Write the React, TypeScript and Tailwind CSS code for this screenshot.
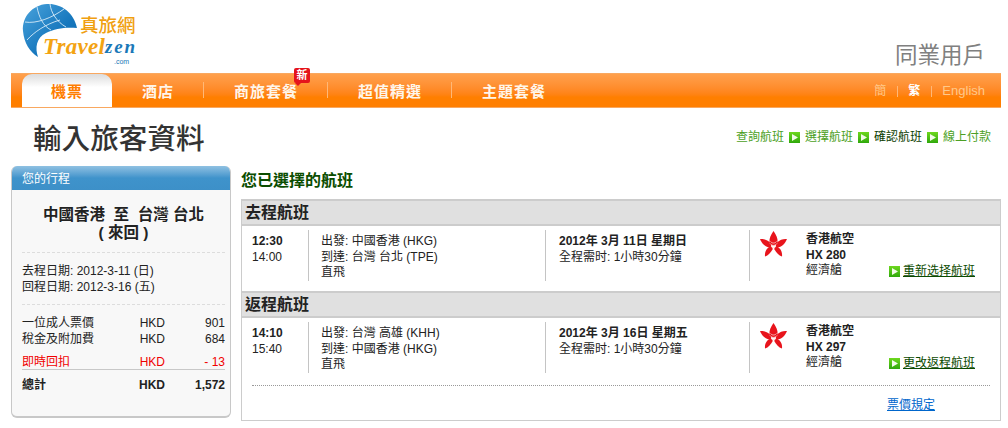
const font = '[font-family:"Liberation_Sans","Noto_Sans_CJK_TC",sans-serif]'

function Logo() {
  return (
    <svg width="120" height="66" viewBox="0 0 120 66" className="block">
      <defs>
        <linearGradient id="globeBg" x1="0" y1="0" x2="1" y2="1">
          <stop offset="0" stopColor="#4aa3dc" />
          <stop offset="0.6" stopColor="#1677bd" />
          <stop offset="1" stopColor="#0f68ab" />
        </linearGradient>
      </defs>
      <path d="M55 28C52 12 38 3 25 4C10 5 0 17 1 31C2 43 8 52 16 57C13 48 14 38 24 33C33 28 45 27 55 28Z" fill="url(#globeBg)" />
      <path d="M3 22C14 24 30 18 42 9M5 40C12 32 24 24 38 20M15 7C17 17 21 26 29 30M28 4C29 13 35 22 44 27" fill="none" stroke="#d6eaf7" strokeWidth="0.9" />
      <text x="58" y="32" fontSize="18.500" fill="#f0a010" fontFamily='"Noto Sans CJK TC", sans-serif' fontWeight="500">真旅網</text>
      <text x="21" y="54" fontSize="23" fontStyle="italic" fontWeight="700" fill="#f3a312" fontFamily='"Liberation Serif", serif' textLength="62">Travel</text>
      <text x="83" y="53" fontSize="19" fontStyle="italic" fontWeight="700" fill="#1a78b8" fontFamily='"Liberation Serif", serif' textLength="30">zen</text>
      <text x="92" y="64" fontSize="7" fill="#1a78b8" fontFamily='"Liberation Sans", sans-serif'>.com</text>
    </svg>
  )
}

function PlayIcon() {
  return (
    <svg width="11" height="11" viewBox="0 0 11 11" className="block shrink-0">
      <defs>
        <linearGradient id="playBg" x1="0" y1="0" x2="0" y2="1">
          <stop offset="0" stopColor="#6ed81e" />
          <stop offset="1" stopColor="#2fa80c" />
        </linearGradient>
      </defs>
      <rect width="11" height="11" fill="url(#playBg)" />
      <path d="M3 2L9 5.500L3 9Z" fill="#f2fbe8" />
    </svg>
  )
}

function AirlineLogo() {
  return (
    <svg width="27" height="26" viewBox="0 0 27 26" className="block">
      <path d="M13.500 0C11 4 9 7 9.500 11C10 13.500 12 14.500 13.500 14.500C15 14.500 17 13.500 17.500 11C18 7 16 4 13.500 0Z" fill="#e8141c" />
      <path d="M0 8C3 7.500 7 8.500 10 11.500C11.500 13.500 11.500 15 10.500 16.500C6 16.500 2 13 0 8Z" fill="#e8141c" />
      <path d="M27 8C24 7.500 20 8.500 17 11.500C15.500 13.500 15.500 15 16.500 16.500C21 16.500 25 13 27 8Z" fill="#e8141c" />
      <path d="M5 25.500C4.500 21 6.500 17 10.500 15.500C12 16 13 17 12.500 18.500C10.500 21.500 8.500 24.500 5 25.500Z" fill="#e8141c" />
      <path d="M22 25.500C22.500 21 20.500 17 16.500 15.500C15 16 14 17 14.500 18.500C16.500 21.500 18.500 24.500 22 25.500Z" fill="#e8141c" />
      <path d="M10 12.500C12 15 15 15 17 12.500M10.500 10.500C12 12.500 15 12.500 16.500 10.500M11 15.500C12.500 16.500 14.500 16.500 16 15.500" fill="none" stroke="#fbd5d0" strokeWidth="0.8" />
    </svg>
  )
}

function Nav() {
  const items = [
    { label: '酒店', w: 'w-[92px]', border: true },
    { label: '商旅套餐', w: 'w-[124px]', border: true, hot: true },
    { label: '超值精選', w: 'w-[124px]', border: true },
    { label: '主題套餐', w: 'w-[124px]', border: false },
  ]
  return (
    <div className="ml-[11px] flex h-[35px] w-[990px] items-end border-y border-[#f9a860] bg-linear-to-b from-[#ffa04c] via-[#ff7f00] via-70% to-[#ff7f00] pl-[11px] pr-[16px]">
      <div className="flex h-[33px] w-[90px] items-center justify-center rounded-t-[10px] bg-linear-to-b from-[#dcdcdc] via-white via-40% to-white pt-[3px] text-[15px] font-bold tracking-[1px] text-[#ff7e00]">
        機票
      </div>
      {items.map((item) => (
        <div key={item.label} className={`relative flex h-[33px] items-center justify-center pt-[3px] ${item.w}`}>
          <span className="text-[15px] font-bold tracking-[1px] text-[#fff6ea]">{item.label}</span>
          {item.border && <span className="absolute right-0 top-[8px] h-[16px] w-px bg-[#ffb877]" />}
          {item.hot && (
            <>
              <span className="absolute right-[18px] top-[-6px] flex h-[15px] w-[16px] items-center justify-center rounded-[2px] bg-[#e5141c] text-[11px] font-bold leading-none text-white">
                新
              </span>
              <span className="absolute right-[27px] top-[9px] h-0 w-0 border-x-[3px] border-t-[3px] border-x-transparent border-t-[#e5141c]" />
            </>
          )}
        </div>
      ))}
      <div className="ml-auto flex h-[33px] items-center pt-[1px] text-[12px] text-[#ffc98a]">
        <span>簡</span>
        <span className="ml-[11px] mr-[10px] h-[11px] w-px bg-[#ffb877]" />
        <span className="font-bold text-white">繁</span>
        <span className="ml-[11px] mr-[10px] h-[11px] w-px bg-[#ffb877]" />
        <span className="text-[13px]">English</span>
      </div>
    </div>
  )
}

function Steps() {
  const steps = ['查詢航班', '選擇航班', '確認航班', '線上付款']
  return (
    <div className="flex items-center gap-[5px] text-[12px] leading-[14px] text-[#4c9f24]">
      {steps.map((step, i) => (
        <div key={step} className="flex items-center gap-[5px]">
          {i > 0 && <PlayIcon />}
          <span className={i === 2 ? 'text-[#0b3d00]' : ''}>{step}</span>
        </div>
      ))}
    </div>
  )
}

function PriceRow({ label, value, red, bold }: { label: string; value: string; red?: boolean; bold?: boolean }) {
  return (
    <div className={`flex h-[15px] items-center ${red ? 'text-[#f00000]' : 'text-[#222]'} ${bold ? 'font-bold' : ''}`}>
      <span className="w-[117px]">{label}</span>
      <span className="w-[26px] text-right">HKD</span>
      <span className="flex-1 text-right">{value}</span>
    </div>
  )
}

function Sidebar() {
  return (
    <div className="h-[252px] w-[220px] shrink-0 overflow-hidden rounded-[6px] border-x border-b-[2px] border-[#c8c8c8] bg-[#f8f8f8] text-[12px]">
      <div className="flex h-[24px] items-center bg-linear-to-b from-[#8fc1e2] via-[#3f93cb] to-[#3d90c8] px-[10px] pt-[1px] text-[12px] text-white">
        您的行程
      </div>
      <div className="mx-[10px] mr-[5px] border-b border-dashed border-[#dddddd] pb-[10px] pt-[16px] text-center text-[15.500px] font-bold leading-[18px] text-[#222]">
        <div>中國香港&nbsp; 至&nbsp; 台灣 台北</div>
        <div>( 來回 )</div>
      </div>
      <div className="mx-[10px] mr-[5px] border-b border-dashed border-[#dddddd] pb-[9px] pt-[10px] leading-[16px] text-[#222]">
        <div>去程日期: 2012-3-11 (日)</div>
        <div>回程日期: 2012-3-16 (五)</div>
      </div>
      <div className="mx-[10px] mr-[5px] pt-[10px]">
        <div className="flex flex-col gap-px">
          <PriceRow label="一位成人票價" value="901" />
          <PriceRow label="稅金及附加費" value="684" />
        </div>
        <div className="mt-[8px] border-b border-[#c8c8c8]">
          <PriceRow label="即時回扣" value="- 13" red />
        </div>
        <div className="mt-[7px]">
          <PriceRow label="總計" value="1,572" bold />
        </div>
      </div>
    </div>
  )
}

type Flight = {
  title: string
  depart: string
  arrive: string
  from: string
  to: string
  date: string
  no: string
  action: string
}

function FlightRows({ flight, h }: { flight: Flight; h: string }) {
  return (
    <>
      <div className="flex h-[27px] items-center border-y-[2px] border-[#cccccc] bg-[#e0e0e0] pl-[3px] text-[16px] font-bold text-[#222]">
        {flight.title}
      </div>
      <div className={`flex pt-[4px] text-[12px] leading-[15.500px] text-[#222] ${h}`}>
        <div className="h-[51px] w-[67px] border-r border-[#c4c4c4] pl-[10px] pt-[4px]">
          <div className="font-bold">{flight.depart}</div>
          <div>{flight.arrive}</div>
        </div>
        <div className="h-[51px] w-[237px] border-r border-[#c4c4c4] pl-[12px] pt-[4px]">
          <div>出發: {flight.from}</div>
          <div>到達: {flight.to}</div>
          <div>直飛</div>
        </div>
        <div className="h-[51px] w-[204px] border-r border-[#c4c4c4] pl-[13px] pt-[4px]">
          <div className="font-bold">{flight.date}</div>
          <div>全程需时: 1小時30分鐘</div>
        </div>
        <div className="pl-[10px] pt-[1px]">
          <AirlineLogo />
        </div>
        <div className="ml-[19px] w-[83px] pt-[2px]">
          <div className="font-bold">香港航空</div>
          <div className="font-bold">{flight.no}</div>
          <div>經濟艙</div>
        </div>
        <div className="flex items-center gap-[3px] self-start pt-[34px] text-[#0b4a00] underline">
          <PlayIcon />
          <span>{flight.action}</span>
        </div>
      </div>
    </>
  )
}

const outbound: Flight = {
  title: '去程航班',
  depart: '12:30',
  arrive: '14:00',
  from: '中國香港 (HKG)',
  to: '台灣 台北 (TPE)',
  date: '2012年 3月 11日 星期日',
  no: 'HX 280',
  action: '重新选择航班',
}

const inbound: Flight = {
  title: '返程航班',
  depart: '14:10',
  arrive: '15:40',
  from: '台灣 高雄 (KHH)',
  to: '中國香港 (HKG)',
  date: '2012年 3月 16日 星期五',
  no: 'HX 297',
  action: '更改返程航班',
}

export default function App() {
  return (
    <div className={`h-[428px] w-[1008px] overflow-hidden bg-white ${font}`}>
      <div className="flex h-[73px] items-start justify-between pl-[22px] pr-[23px]">
        <Logo />
        <div className="mt-[42px] text-[22.500px] leading-[28px] text-[#808080]">同業用戶</div>
      </div>
      <Nav />
      <div className="flex h-[58px] items-center justify-between pl-[33px] pr-[17px]">
        <h1 className="pt-[4px] text-[28.600px] font-medium leading-[36px] text-[#333]">輸入旅客資料</h1>
        <Steps />
      </div>
      <div className="flex pl-[11px]">
        <Sidebar />
        <div className="ml-[10px] w-[760px]">
          <div className="h-[33px] pt-[5px] text-[16px] font-bold leading-[20px] text-[#0b4d00]">您已選擇的航班</div>
          <div className="h-[222px] border-x border-b border-[#cccccc]">
            <FlightRows flight={outbound} h="h-[65px]" />
            <FlightRows flight={inbound} h="h-[67px]" />
            <div className="mx-[10px] border-t border-dotted border-[#999]" />
            <div className="pl-[645px] pt-[11px] text-[12px] leading-[16px] text-[#0066cc] underline">票價規定</div>
          </div>
        </div>
      </div>
    </div>
  )
}
